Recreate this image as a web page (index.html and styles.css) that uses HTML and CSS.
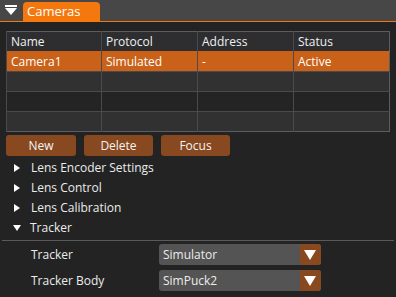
FILE: index.html
```html
<!DOCTYPE html>
<html lang="en">
<head>
    <meta charset="UTF-8">
    <title>Cameras</title>
    <link rel="stylesheet" href="styles.css">
</head>
<body>
    <div class="topbar">
        <svg class="menu-icon" width="12" height="11" viewBox="0 0 12 11">
            <rect x="0" y="0" width="12" height="2" fill="#fff"/>
            <polygon points="0,3 12,3 6,10" fill="#fff"/>
        </svg>
        <div class="tab">Cameras</div>
    </div>

    <div class="panel">
        <table class="cams">
            <thead>
                <tr>
                    <th class="c1">Name</th>
                    <th class="c2">Protocol</th>
                    <th class="c3">Address</th>
                    <th>Status</th>
                </tr>
            </thead>
            <tbody>
                <tr class="selected">
                    <td>Camera1</td>
                    <td>Simulated</td>
                    <td>-</td>
                    <td>Active</td>
                </tr>
                <tr class="odd"><td></td><td></td><td></td><td></td></tr>
                <tr class="even"><td></td><td></td><td></td><td></td></tr>
                <tr class="odd"><td></td><td></td><td></td><td></td></tr>
            </tbody>
        </table>

        <div class="buttons">
            <button>New</button>
            <button>Delete</button>
            <button>Focus</button>
        </div>

        <ul class="tree">
            <li><span class="arrow closed"></span>Lens Encoder Settings</li>
            <li><span class="arrow closed"></span>Lens Control</li>
            <li><span class="arrow closed"></span>Lens Calibration</li>
            <li><span class="arrow open"></span>Tracker</li>
        </ul>
    </div>

    <div class="separator"></div>

    <div class="fields">
        <div class="field">
            <label>Tracker</label>
            <div class="combo"><span class="value">Simulator</span><span class="drop"></span></div>
        </div>
        <div class="field">
            <label>Tracker Body</label>
            <div class="combo"><span class="value">SimPuck2</span><span class="drop"></span></div>
        </div>
    </div>
</body>
</html>
```

FILE: styles.css
```css
body {
    margin: 0;
    background-color: #232323;
    font-family: "Open Sans", "Noto Sans", sans-serif;
    font-size: 12px;
    color: #ececec;
    overflow: hidden;
}
.topbar {
    height: 21px;
    background-color: #474747;
    border-bottom: 1px solid #f5780f;
    display: flex;
    align-items: flex-end;
}
.menu-icon {
    margin: 0 6px 5px 5px;
}
.tab {
    background-color: #f5780f;
    color: #fff;
    font-size: 13px;
    height: 19px;
    line-height: 18px;
    width: 73px;
    padding-left: 4px;
    border-radius: 4px 4px 0 0;
}
.panel {
    padding: 9px 6px 0 6px;
}
.cams {
    width: 384px;
    border-collapse: collapse;
    border: 1px solid #5c5c63;
}
.cams th, .cams td {
    height: 19px;
    padding: 0 0 0 4px;
    text-align: left;
    font-weight: normal;
    border-left: 1px solid #4a4a4e;
    border-top: 1px solid #4a4a4e;
    white-space: nowrap;
}
.cams th {
    background-color: #2e2e30;
    color: #f0f0f0;
    border-top: none;
}
.cams .c1 { width: 90px; }
.cams .c2 { width: 91px; }
.cams .c3 { width: 91px; }
.cams tr.selected td {
    background-color: #ca6118;
    color: #fff;
    border-top: 1px solid #ca6118;
}
.cams tr.odd td {
    background-color: #313131;
}
.cams tr.even td {
    background-color: #242424;
}
.buttons {
    display: flex;
    gap: 8px;
    margin-top: 3px;
}
.buttons button {
    width: 70px;
    height: 21px;
    border: none;
    border-radius: 3px;
    background-color: #884820;
    color: #f4f4f4;
    font-family: inherit;
    font-size: 12px;
    padding: 0;
}
.buttons button + button {
    width: 69px;
}
.tree {
    list-style: none;
    margin: 2px 0 0 0;
    padding: 0;
}
.tree li {
    height: 20px;
    line-height: 20px;
    display: flex;
    align-items: center;
}
.arrow {
    width: 0;
    height: 0;
    margin: 0 11px 0 8px;
}
.arrow.closed {
    border-top: 4px solid transparent;
    border-bottom: 4px solid transparent;
    border-left: 6px solid #fff;
}
.arrow.open {
    border-left: 4px solid transparent;
    border-right: 4px solid transparent;
    border-top: 6px solid #fff;
    margin: 0 9px 0 7px;
}
.separator {
    height: 1px;
    background-color: #5a5a5a;
    margin: 2px 2px 0 2px;
}
.fields {
    padding: 3px 0 0 31px;
}
.field {
    display: flex;
    align-items: center;
    height: 21px;
    margin-bottom: 5px;
}
.field label {
    width: 128px;
}
.combo {
    display: flex;
    width: 162px;
    height: 21px;
    border-radius: 3px;
    overflow: hidden;
    background-color: #545454;
}
.combo .value {
    flex: 1;
    padding-left: 4px;
    line-height: 21px;
}
.combo .drop {
    width: 21px;
    background-color: #884820;
    position: relative;
}
.combo .drop::after {
    content: "";
    position: absolute;
    left: 4px;
    top: 6px;
    border-left: 6px solid transparent;
    border-right: 6px solid transparent;
    border-top: 10px solid #fff;
}
```
